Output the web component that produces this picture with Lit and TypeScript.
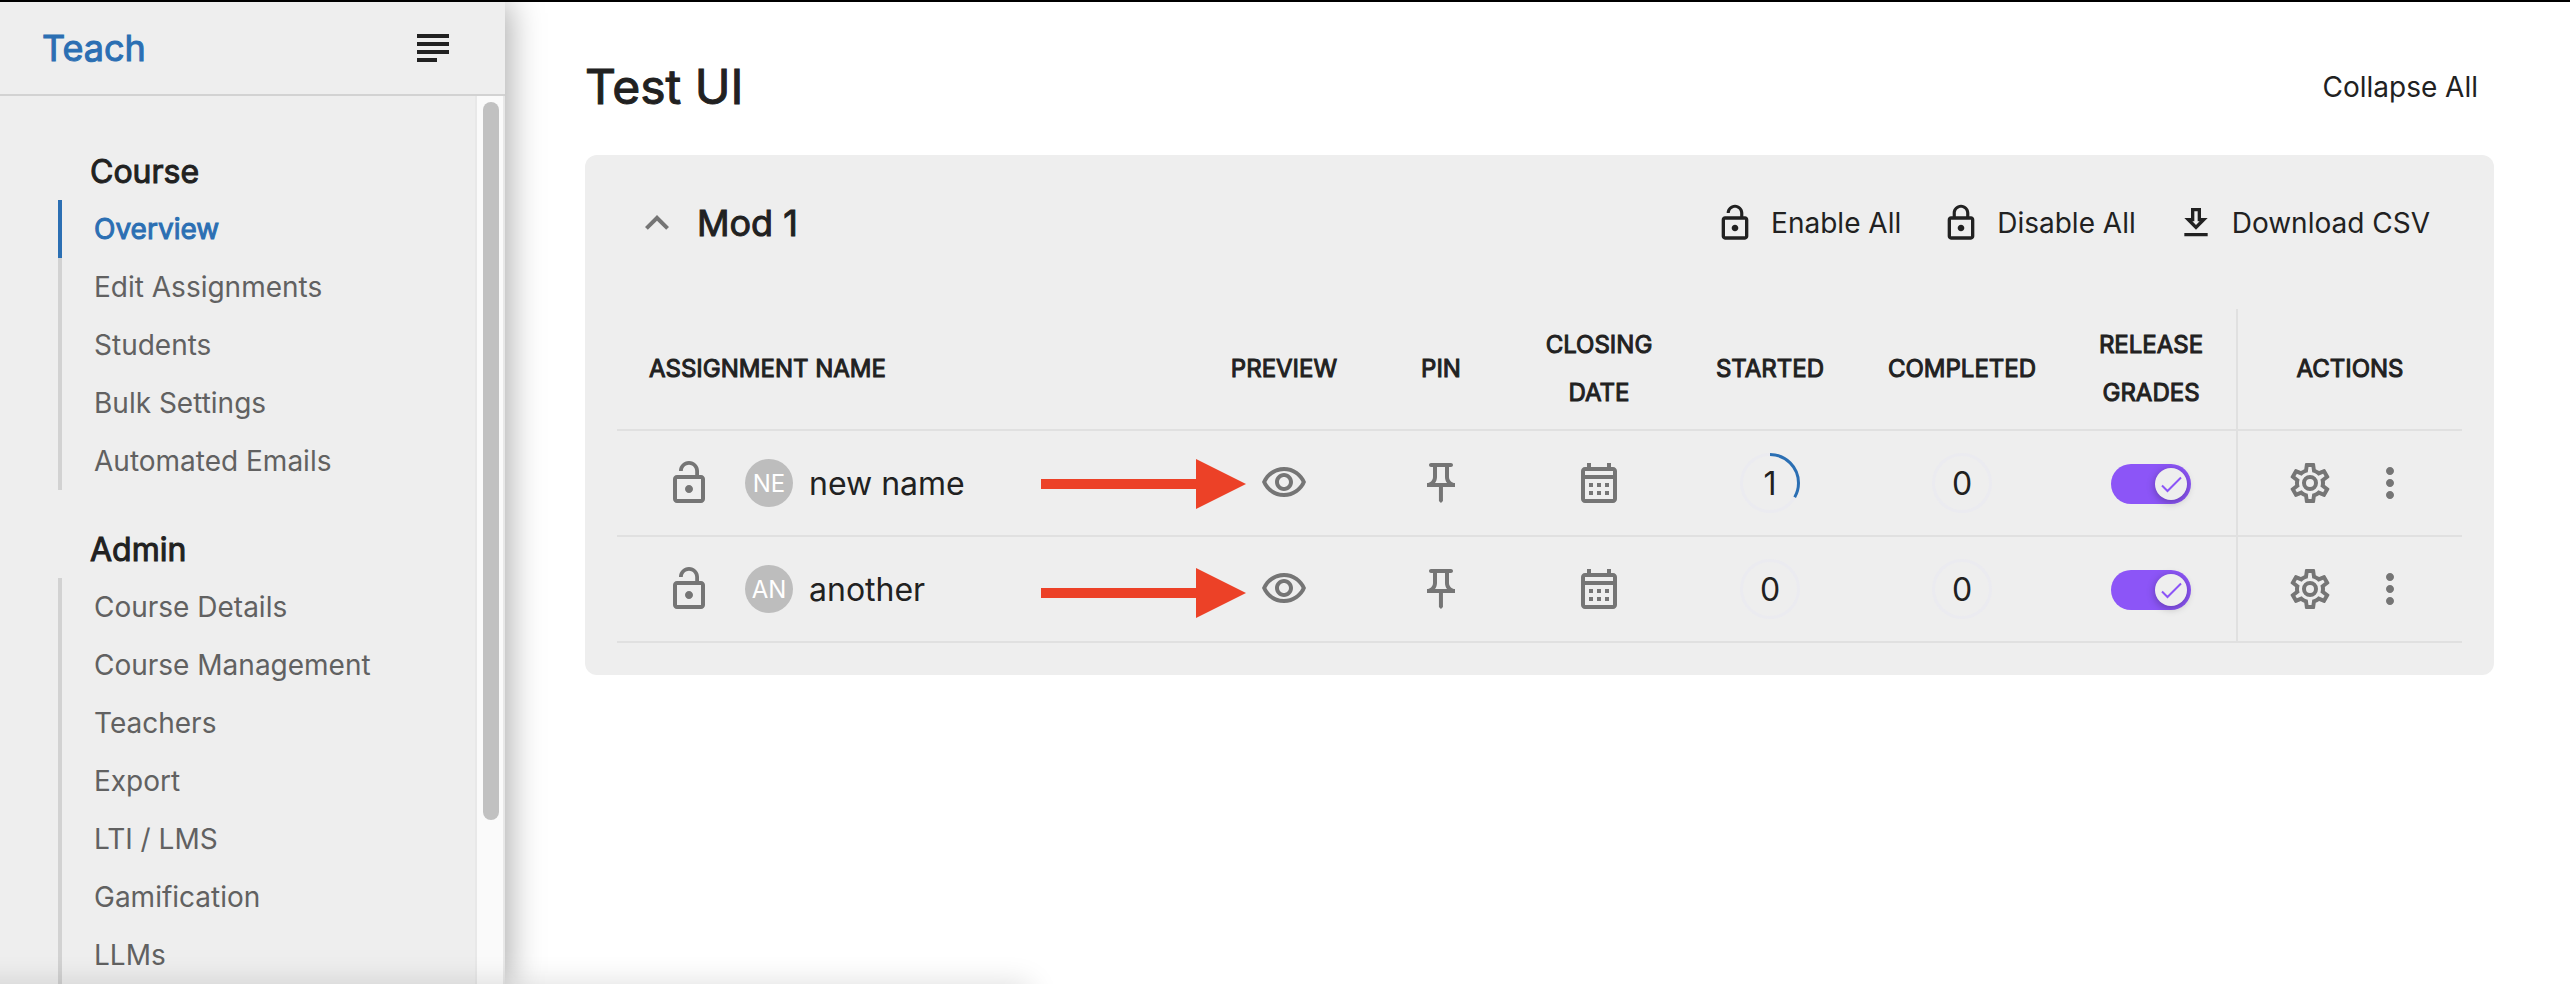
import { LitElement, html, css, svg } from "lit";
import { customElement, property } from "lit/decorators.js";
import { classMap } from "lit/directives/class-map.js";

const ICONS: Record<string, string> = {
  menu: "M14 17H4v2h10v-2zm6-8H4v2h16V9zM4 15h16v-2H4v2zM4 5v2h16V5H4z",
  collapse: "M12 8l-6 6 1.41 1.41L12 10.83l4.59 4.58L18 14z",
  unlock:
    "M12 17c1.1 0 2-.9 2-2s-.9-2-2-2-2 .9-2 2 .9 2 2 2zm6-9h-1V6c0-2.76-2.24-5-5-5S7 3.24 7 6h1.9c0-1.71 1.39-3.1 3.1-3.1 1.71 0 3.1 1.39 3.1 3.1v2H6c-1.1 0-2 .9-2 2v10c0 1.1.9 2 2 2h12c1.1 0 2-.9 2-2V10c0-1.1-.9-2-2-2zm0 12H6V10h12v10z",
  lock: "M12 17c1.1 0 2-.9 2-2s-.9-2-2-2-2 .9-2 2 .9 2 2 2zm6-9h-1V6c0-2.76-2.24-5-5-5S7 3.24 7 6v2H6c-1.1 0-2 .9-2 2v10c0 1.1.9 2 2 2h12c1.1 0 2-.9 2-2V10c0-1.1-.9-2-2-2zM8.9 6c0-1.71 1.39-3.1 3.1-3.1s3.1 1.39 3.1 3.1v2H8.9V6zM18 20H6V10h12v10z",
  download:
    "M13 5v6h1.17L12 13.17 9.83 11H11V5h2m2-2H9v6H5l7 7 7-7h-4V3zm4 15H5v2h14v-2z",
  eye: "M12 6c3.79 0 7.17 2.13 8.82 5.5C19.17 14.87 15.79 17 12 17s-7.17-2.13-8.82-5.5C4.83 8.13 8.21 6 12 6m0-2C7 4 2.73 7.11 1 11.5 2.73 15.89 7 19 12 19s9.27-3.11 11-7.5C21.27 7.11 17 4 12 4zm0 5c1.38 0 2.5 1.12 2.5 2.5S13.38 14 12 14s-2.5-1.12-2.5-2.5S10.62 9 12 9m0-2c-2.48 0-4.5 2.02-4.5 4.5S9.52 16 12 16s4.5-2.02 4.5-4.5S14.48 7 12 7z",
  pin: "M14 4v5c0 1.12.37 2.16 1 3H9c.65-.86 1-1.9 1-3V4h4m3-2H7c-.55 0-1 .45-1 1s.45 1 1 1h1v5c0 1.66-1.34 3-3 3v2h5.97v7l1 1 1-1v-7H19v-2c-1.66 0-3-1.34-3-3V4h1c.55 0 1-.45 1-1s-.45-1-1-1z",
  calendar:
    "M19 4h-1V2h-2v2H8V2H6v2H5c-1.11 0-1.99.9-1.99 2L3 20c0 1.1.89 2 2 2h14c1.1 0 2-.9 2-2V6c0-1.1-.9-2-2-2zm0 16H5V10h14v10zm0-12H5V6h14v2zM9 14H7v-2h2v2zm4 0h-2v-2h2v2zm4 0h-2v-2h2v2zm-8 4H7v-2h2v2zm4 0h-2v-2h2v2zm4 0h-2v-2h2v2z",
  cog: "M12,8A4,4 0 0,1 16,12A4,4 0 0,1 12,16A4,4 0 0,1 8,12A4,4 0 0,1 12,8M12,10A2,2 0 0,0 10,12A2,2 0 0,0 12,14A2,2 0 0,0 14,12A2,2 0 0,0 12,10M10,22C9.75,22 9.54,21.82 9.5,21.58L9.13,18.93C8.5,18.68 7.96,18.34 7.44,17.94L4.95,18.95C4.73,19.03 4.46,18.95 4.34,18.73L2.34,15.27C2.21,15.05 2.27,14.78 2.46,14.63L4.57,12.97L4.5,12L4.57,11L2.46,9.37C2.27,9.22 2.21,8.95 2.34,8.73L4.34,5.27C4.46,5.05 4.73,4.96 4.95,5.05L7.44,6.05C7.96,5.66 8.5,5.32 9.13,5.07L9.5,2.42C9.54,2.18 9.75,2 10,2H14C14.25,2 14.46,2.18 14.5,2.42L14.87,5.07C15.5,5.32 16.04,5.66 16.56,6.05L19.05,5.05C19.27,4.96 19.54,5.05 19.66,5.27L21.66,8.73C21.79,8.95 21.73,9.22 21.54,9.37L19.43,11L19.5,12L19.43,13L21.54,14.63C21.73,14.78 21.79,15.05 21.66,15.27L19.66,18.73C19.54,18.95 19.27,19.04 19.05,18.95L16.56,17.95C16.04,18.34 15.5,18.68 14.87,18.93L14.5,21.58C14.46,21.82 14.25,22 14,22H10M11.25,4L10.88,6.61C9.68,6.86 8.62,7.5 7.85,8.39L5.44,7.35L4.69,8.65L6.8,10.2C6.4,11.37 6.4,12.64 6.8,13.8L4.68,15.36L5.43,16.66L7.86,15.62C8.63,16.5 9.68,17.14 10.87,17.38L11.24,20H12.76L13.13,17.39C14.32,17.14 15.37,16.5 16.14,15.62L18.57,16.66L19.32,15.36L17.2,13.81C17.6,12.64 17.6,11.37 17.2,10.2L19.31,8.65L18.56,7.35L16.15,8.39C15.38,7.5 14.32,6.86 13.12,6.62L12.75,4H11.25Z",
  more: "M12 8c1.1 0 2-.9 2-2s-.9-2-2-2-2 .9-2 2 .9 2 2 2zm0 2c-1.1 0-2 .9-2 2s.9 2 2 2 2-.9 2-2-.9-2-2-2zm0 6c-1.1 0-2 .9-2 2s.9 2 2 2 2-.9 2-2-.9-2-2-2z",
};

const icon = (name: string) => html`<svg class="icon" viewBox="0 0 24 24" aria-hidden="true">
  <path d=${ICONS[name]}></path>
</svg>`;

const shared = css`
  button {
    display: inline-flex;
    align-items: center;
    justify-content: center;
    margin: 0;
    padding: 0;
    border: 0;
    background: none;
    color: inherit;
    font: inherit;
    cursor: pointer;
  }
  .icon {
    display: block;
    flex: none;
    width: 48px;
    height: 48px;
    fill: currentColor;
  }
  .strong {
    font-weight: 400;
    -webkit-text-stroke: 1px currentColor;
  }
`;

@customElement("side-nav")
class SideNav extends LitElement {
  static styles = [
    shared,
    css`
      :host {
        display: flex;
        flex-direction: column;
        box-sizing: border-box;
        width: 505px;
        flex: none;
        background: #eeeeee;
        box-shadow: 4px 0 32px rgba(0, 0, 0, 0.34);
        z-index: 1;
      }
      .brand-bar {
        display: flex;
        align-items: center;
        justify-content: space-between;
        flex: none;
        height: 92px;
        padding: 0 48px 0 42px;
        border-bottom: 2px solid #d2d2d2;
      }
      .brand {
        color: #2b6fb3;
        font-size: 36px;
        text-decoration: none;
      }
      .scroller {
        display: flex;
        flex: 1;
        min-height: 0;
      }
      nav {
        flex: 1;
        overflow: hidden;
        padding: 48px 0 0 58px;
      }
      h2 {
        margin: 0;
        padding-left: 32px;
        font-size: 32px;
        line-height: 56px;
        color: #212121;
      }
      ul {
        list-style: none;
        margin: 0 0 32px;
        padding: 0;
      }
      a.item {
        display: block;
        padding-left: 32px;
        border-left: 4px solid #d2d2d2;
        font-size: 28px;
        line-height: 58px;
        color: #616161;
        text-decoration: none;
      }
      a.current {
        border-color: #2b6fb3;
        color: #2b6fb3;
      }
      .track {
        flex: none;
        box-sizing: border-box;
        width: 30px;
        padding: 6px;
        border: solid #e8e8e8;
        border-width: 0 2px;
        background: #fafafa;
      }
      .thumb {
        width: 16px;
        height: 82%;
        border-radius: 8px;
        background: #c1c1c1;
      }
    `,
  ];

  groups = [
    {
      title: "Course",
      items: ["Overview", "Edit Assignments", "Students", "Bulk Settings", "Automated Emails"],
    },
    {
      title: "Admin",
      items: [
        "Course Details",
        "Course Management",
        "Teachers",
        "Export",
        "LTI / LMS",
        "Gamification",
        "LLMs",
      ],
    },
  ];

  link(name: string) {
    const current = name === "Overview";
    return html`<li>
      <a class=${classMap({ item: true, current, strong: current })} href="#">${name}</a>
    </li>`;
  }

  render() {
    return html`
      <div class="brand-bar">
        <a class="brand strong" href="#">Teach</a>
        <button aria-label="Toggle menu">${icon("menu")}</button>
      </div>
      <div class="scroller">
        <nav>
          ${this.groups.map(
            (g) => html`<h2 class="strong">${g.title}</h2>
              <ul>
                ${g.items.map((i) => this.link(i))}
              </ul>`
          )}
        </nav>
        <div class="track"><div class="thumb"></div></div>
      </div>
    `;
  }
}

@customElement("count-ring")
class CountRing extends LitElement {
  @property({ type: Number }) value = 0;
  @property({ type: Number }) total = 3;

  static styles = css`
    :host {
      display: inline-grid;
      place-items: center;
      width: 60px;
      height: 60px;
      vertical-align: middle;
    }
    svg,
    span {
      grid-area: 1 / 1;
    }
    svg {
      width: 60px;
      height: 60px;
    }
    circle {
      fill: none;
      stroke: #ebebf0;
      stroke-width: 3;
    }
    .arc {
      stroke: #2b6fb3;
    }
  `;

  render() {
    const share = (this.value / this.total) * 100;
    return html`
      <svg viewBox="0 0 60 60" aria-hidden="true">
        <circle cx="30" cy="30" r="28.5"></circle>
        ${share > 0
          ? svg`<circle class="arc" cx="30" cy="30" r="28.5" pathLength="100"
              stroke-dasharray="${share} 100" transform="rotate(-90 30 30)"></circle>`
          : ""}
      </svg>
      <span>${this.value}</span>
    `;
  }
}

@customElement("toggle-switch")
class ToggleSwitch extends LitElement {
  @property() label = "";

  static styles = css`
    :host {
      display: inline-block;
      vertical-align: middle;
    }
    label {
      display: grid;
      align-items: center;
      width: 80px;
      height: 40px;
    }
    input,
    svg {
      grid-area: 1 / 1;
    }
    input {
      appearance: none;
      margin: 0;
      width: 80px;
      height: 40px;
      border-radius: 20px;
      background: #bdbdbd;
    }
    input:checked {
      background: #8c55f7;
    }
    svg {
      width: 32px;
      height: 32px;
      margin-left: 4px;
      border-radius: 50%;
      background: #eeeeee;
      box-shadow: 0 2px 8px rgba(0, 0, 0, 0.3);
      pointer-events: none;
    }
    input:checked + svg {
      margin-left: 44px;
    }
    path {
      fill: none;
      stroke: #8c55f7;
      stroke-width: 2;
    }
  `;

  render() {
    return html`<label>
      <input type="checkbox" role="switch" checked aria-label=${this.label} />
      <svg viewBox="0 0 32 32" aria-hidden="true"><path d="M7 17.5l5.5 5.5L26 9.5"></path></svg>
    </label>`;
  }
}

interface Assignment {
  name: string;
  initials: string;
  started: number;
  completed: number;
}

@customElement("module-card")
class ModuleCard extends LitElement {
  static styles = [
    shared,
    css`
      :host {
        display: block;
        padding: 0 32px 32px;
        border-radius: 12px;
        background: #eeeeee;
      }
      header {
        display: flex;
        align-items: center;
        justify-content: space-between;
        height: 136px;
        margin-bottom: 18px;
        padding: 0 32px 0 16px;
      }
      .title,
      .tools {
        display: flex;
        align-items: center;
      }
      .title {
        gap: 16px;
      }
      .muted {
        color: #757575;
      }
      h2 {
        margin: 0;
        font-size: 36px;
      }
      .tools {
        gap: 40px;
      }
      .tools button {
        gap: 16px;
        font-size: 28px;
      }
      .tools .icon {
        width: 40px;
        height: 40px;
      }
      table {
        width: 100%;
        border-collapse: separate;
        border-spacing: 0;
        table-layout: fixed;
      }
      th,
      td {
        padding: 0;
        border-bottom: 2px solid #e0e0e0;
        text-align: center;
        vertical-align: middle;
      }
      th {
        height: 120px;
        font-size: 24px;
        font-weight: inherit;
        line-height: 48px;
        text-transform: uppercase;
      }
      td {
        height: 104px;
        font-size: 32px;
      }
      .preview {
        width: 164px;
      }
      .pin {
        width: 150px;
      }
      .date {
        width: 166px;
      }
      .started {
        width: 176px;
      }
      .completed {
        width: 208px;
      }
      .release {
        width: 170px;
      }
      .name {
        padding-left: 32px;
        text-align: left;
      }
      .actions {
        width: 224px;
        border-left: 2px solid #e0e0e0;
      }
      td.name {
        position: relative;
        padding-left: 48px;
      }
      .row {
        display: flex;
        align-items: center;
      }
      .avatar {
        display: grid;
        place-items: center;
        width: 48px;
        height: 48px;
        margin: 0 16px 0 32px;
        border-radius: 50%;
        background: #bdbdbd;
        color: #ffffff;
        font-size: 24px;
      }
      td button {
        color: #757575;
        vertical-align: middle;
      }
      .pair {
        display: flex;
        justify-content: center;
        gap: 32px;
      }
      .arrow {
        position: absolute;
        right: -44px;
        top: 28px;
        width: 205px;
        height: 50px;
        fill: #ec4127;
      }
      tr:last-child .arrow {
        top: 31px;
      }
    `,
  ];

  rows: Assignment[] = [
    { name: "new name", initials: "NE", started: 1, completed: 0 },
    { name: "another", initials: "AN", started: 0, completed: 0 },
  ];

  render() {
    return html`
      <header>
        <div class="title">
          <button class="muted" aria-label="Collapse module">${icon("collapse")}</button>
          <h2 class="strong">Mod 1</h2>
        </div>
        <div class="tools">
          <button>${icon("unlock")}Enable All</button>
          <button>${icon("lock")}Disable All</button>
          <button>${icon("download")}Download CSV</button>
        </div>
      </header>
      <table>
        <thead class="strong">
          <tr>
            <th class="name">Assignment Name</th>
            <th class="preview">Preview</th>
            <th class="pin">Pin</th>
            <th class="date">Closing<br />Date</th>
            <th class="started">Started</th>
            <th class="completed">Completed</th>
            <th class="release">Release<br />Grades</th>
            <th class="actions">Actions</th>
          </tr>
        </thead>
        <tbody>
          ${this.rows.map(
            (r) => html`<tr>
              <td class="name">
                <div class="row">
                  <button aria-label="Lock assignment">${icon("unlock")}</button>
                  <span class="avatar">${r.initials}</span>
                  <span>${r.name}</span>
                </div>
                <svg class="arrow" viewBox="0 0 205 50" aria-hidden="true">
                  <path d="M0 20H155V0L205 25L155 50V30H0Z"></path>
                </svg>
              </td>
              <td><button aria-label="Preview">${icon("eye")}</button></td>
              <td><button aria-label="Pin">${icon("pin")}</button></td>
              <td><button aria-label="Closing date">${icon("calendar")}</button></td>
              <td><count-ring .value=${r.started}></count-ring></td>
              <td><count-ring .value=${r.completed}></count-ring></td>
              <td><toggle-switch label="Release grades"></toggle-switch></td>
              <td class="actions">
                <div class="pair">
                  <button aria-label="Settings">${icon("cog")}</button>
                  <button aria-label="More">${icon("more")}</button>
                </div>
              </td>
            </tr>`
          )}
        </tbody>
      </table>
    `;
  }
}

@customElement("app-root")
class AppRoot extends LitElement {
  static styles = [
    shared,
    css`
      :host {
        position: relative;
        display: flex;
        box-sizing: border-box;
        height: 100vh;
        overflow: hidden;
        border-top: 2px solid #000000;
        background: #ffffff;
        color: #212121;
        font-family: Inter, "Liberation Sans", sans-serif;
      }
      main {
        flex: 1;
        min-width: 0;
        padding: 0 76px 0 80px;
      }
      .page-head {
        display: flex;
        align-items: center;
        justify-content: space-between;
        box-sizing: border-box;
        height: 153px;
        padding: 16px 16px 0 0;
      }
      h1 {
        margin: 0;
        font-size: 48px;
        line-height: 64px;
      }
      .collapse-all {
        font-size: 28px;
      }
      .status-shadow {
        position: absolute;
        left: -40px;
        top: 100%;
        z-index: 2;
        width: 1070px;
        height: 40px;
        box-shadow: 0 0 30px rgba(0, 0, 0, 0.14);
        pointer-events: none;
      }
    `,
  ];

  render() {
    return html`
      <side-nav></side-nav>
      <main>
        <div class="page-head">
          <h1 class="strong">Test UI</h1>
          <button class="collapse-all">Collapse All</button>
        </div>
        <module-card></module-card>
      </main>
      <div class="status-shadow"></div>
    `;
  }
}
